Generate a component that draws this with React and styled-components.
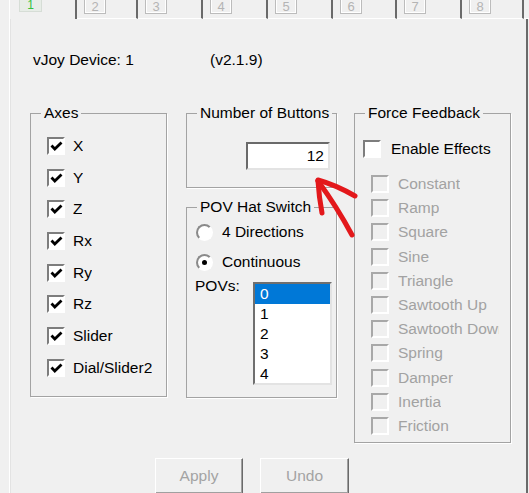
import React from "react";
import styled, { createGlobalStyle } from "styled-components";

const GlobalStyle = createGlobalStyle`
    body {
        margin: 0;
        background: #f0f0f0;
        font-family: "Liberation Sans", Arial, sans-serif;
    }
`

const Page = styled.div`
    position: relative;
    width: 529px;
    height: 493px;
    overflow: hidden;
    background: #f0f0f0;
    font-size: 15.5px;
    color: #000;
`

const TabStrip = styled.div`
    display: flex;
    height: 19px;
    padding-left: 9px;
`

const Tab = styled.div`
    box-sizing: border-box;
    width: ${({ $w }) => $w}px;
    height: 19px;
    border-right: 2px solid #6a6a6a;
    border-bottom: ${({ $active }) => ($active ? "none" : "1px solid #fff")};
    border-left: ${({ $active }) => ($active ? "1px solid #fff" : "none")};
    padding-left: ${({ $active }) => ($active ? 9 : 7)}px;
    display: flex;
    align-items: flex-start;
`

const TabFiller = styled.div`
    flex: 1;
    border-bottom: 1px solid #fff;
`

const TabIcon = styled.div`
    width: 23px;
    height: 13px;
    margin-top: -1px;
    box-sizing: border-box;
    background: #e7ede7;
    border: 1px solid #d6ddd6;
    color: #33c23f;
    font-size: 12px;
    line-height: 11px;
    text-align: center;
`

const DigitBox = styled.div`
    width: 22px;
    height: 16px;
    margin-top: -2px;
    box-sizing: border-box;
    border: 1px solid #bcbcbc;
    box-shadow: inset 1px 1px #fff, inset -1px -1px #fff;
    color: #b4b4b4;
    font-size: 13px;
    line-height: 15px;
    text-align: center;
`

const Panel = styled.div`
    box-sizing: border-box;
    margin-left: 9px;
    width: 519px;
    height: 480px;
    border-left: 1px solid #fff;
    border-right: 2px solid #6a6a6a;
    box-shadow: inset 1px 0 #e3e3e3;
    padding: 32px 0 0 20px;
`

const Header = styled.div`
    display: flex;
    margin-left: 3px;
    line-height: 18px;
`

const DeviceLabel = styled.span`
    width: 177px;
`

const GroupsRow = styled.div`
    display: flex;
    align-items: flex-start;
    margin-top: 35px;
`

const Group = styled.fieldset`
    box-sizing: border-box;
    margin: 0;
    margin-left: ${({ $ml }) => $ml || 0}px;
    padding: 0;
    min-width: 0;
    width: ${({ $w }) => $w}px;
    height: ${({ $h }) => $h}px;
    border: 1px solid #a3a3a3;
    box-shadow: 1px 1px 0 #fff;
`

const Legend = styled.legend`
    margin-left: 10px;
    padding: 0 3px;
    line-height: 18px;
`

const Column = styled.div`
    display: flex;
    flex-direction: column;
    gap: 10px;
    margin-left: 19px;
`

const AxesList = styled.div`
    padding: 8px 0 0 16px;
`

const CheckRow = styled.div`
    display: flex;
    align-items: center;
    height: ${({ $h }) => $h}px;
    gap: ${({ $gap }) => $gap || 8}px;
    color: ${({ $disabled }) => ($disabled ? "#a2a2a2" : "#000")};
`

const Box = styled.div`
    flex: none;
    box-sizing: border-box;
    width: 18px;
    height: 18px;
    border: 2px solid;
    border-color: ${({ $disabled }) =>
        $disabled ? "#a8a8a8 #fff #fff #a8a8a8" : "#7d7d7d #fff #fff #7d7d7d"};
    background: ${({ $disabled }) => ($disabled ? "#f0f0f0" : "#fff")};
    display: flex;
    align-items: center;
    justify-content: center;
`

const Label = styled.span`
    white-space: nowrap;
    overflow: hidden;
    max-width: ${({ $max }) => ($max ? `${$max}px` : "none")};
    line-height: 18px;
`

const NumberWrap = styled.div`
    display: flex;
    justify-content: flex-end;
    padding: 20px 6px 0 0;
`

const NumberInput = styled.div`
    box-sizing: border-box;
    width: 84px;
    height: 28px;
    border: 2px solid;
    border-color: #6a6a6a #e3e3e3 #e3e3e3 #6a6a6a;
    background: #fff;
    text-align: right;
    padding-right: 4px;
    line-height: 24px;
`

const PovBody = styled.div`
    padding: 1px 0 0 9px;
`

const RadioRow = styled.div`
    display: flex;
    align-items: center;
    gap: 9px;
    height: 30px;
`

const Radio = styled.div`
    flex: none;
    box-sizing: border-box;
    width: 17px;
    height: 17px;
    border-radius: 50%;
    border: 2px solid;
    border-color: #8a8a8a #fff #fff #8a8a8a;
    background: #fff;
    display: flex;
    align-items: center;
    justify-content: center;

    &::after {
        content: "";
        display: ${({ $on }) => ($on ? "block" : "none")};
        width: 5px;
        height: 5px;
        border-radius: 50%;
        background: #000;
    }
`

const PovRow = styled.div`
    display: flex;
    align-items: flex-start;
    margin-left: -1px;
`

const PovLabel = styled.span`
    width: 58px;
    line-height: 18px;
`

const ListBox = styled.div`
    box-sizing: border-box;
    width: 79px;
    height: 103px;
    margin-top: 5px;
    border: 2px solid;
    border-color: #6f6f6f #e3e3e3 #e3e3e3 #6f6f6f;
    background: #fff;
`

const ListItem = styled.div`
    height: 20px;
    line-height: 20px;
    padding-left: 5px;
    background: ${({ $selected }) => ($selected ? "#0078d7" : "transparent")};
    color: ${({ $selected }) => ($selected ? "#fff" : "#000")};
`

const FfBody = styled.div`
    padding: 15px 0 0 8px;
`

const EffectList = styled.div`
    margin-top: 11px;
    padding-left: 8px;
`

const ButtonRow = styled.div`
    display: flex;
    gap: 17px;
    margin-top: 15px;
    padding-left: 125px;
`

const PushButton = styled.div`
    box-sizing: border-box;
    width: ${({ $w }) => $w}px;
    height: 36px;
    border: 1px solid;
    border-color: #fff #6a6a6a #6a6a6a #fff;
    box-shadow: inset -1px -1px #a0a0a0;
    color: #a3a3a3;
    display: flex;
    align-items: center;
    justify-content: center;
`

const Arrow = styled.svg`
    position: absolute;
    left: 0;
    top: 0;
    pointer-events: none;
`

const Check = () => (
    <svg width="13" height="12" viewBox="0 0 13 12">
        <polyline points="1.5,5.5 4.8,9 11.5,2.5" fill="none" stroke="#000" strokeWidth="2.8" />
    </svg>
)

const tabs = [
    { n: 1, w: 68, active: true },
    { n: 2, w: 61 },
    { n: 3, w: 65 },
    { n: 4, w: 65 },
    { n: 5, w: 65 },
    { n: 6, w: 64 },
    { n: 7, w: 65 },
    { n: 8, w: 62 },
]

const axes = ["X", "Y", "Z", "Rx", "Ry", "Rz", "Slider", "Dial/Slider2"]

const effects = [
    "Constant", "Ramp", "Square", "Sine", "Triangle", "Sawtooth Up",
    "Sawtooth Down", "Spring", "Damper", "Inertia", "Friction",
]

export default function App() {
    return (
        <>
            <GlobalStyle />
            <Page>
                <TabStrip>
                    {tabs.map((t) => (
                        <Tab key={t.n} $w={t.w} $active={t.active}>
                            {t.active ? <TabIcon>1</TabIcon> : <DigitBox>{t.n}</DigitBox>}
                        </Tab>
                    ))}
                    <TabFiller />
                </TabStrip>
                <Panel>
                    <Header>
                        <DeviceLabel>vJoy Device: 1</DeviceLabel>
                        <span>(v2.1.9)</span>
                    </Header>
                    <GroupsRow>
                        <Group $w={137} $h={293}>
                            <Legend>Axes</Legend>
                            <AxesList>
                                {axes.map((a) => (
                                    <CheckRow key={a} $h={31.7}>
                                        <Box><Check /></Box>
                                        <Label>{a}</Label>
                                    </CheckRow>
                                ))}
                            </AxesList>
                        </Group>
                        <Column>
                            <Group $w={151} $h={84}>
                                <Legend>Number of Buttons</Legend>
                                <NumberWrap>
                                    <NumberInput>12</NumberInput>
                                </NumberWrap>
                            </Group>
                            <Group $w={151} $h={200}>
                                <Legend>POV Hat Switch</Legend>
                                <PovBody>
                                    <RadioRow>
                                        <Radio />
                                        <span>4 Directions</span>
                                    </RadioRow>
                                    <RadioRow>
                                        <Radio $on />
                                        <span>Continuous</span>
                                    </RadioRow>
                                    <PovRow>
                                        <PovLabel>POVs:</PovLabel>
                                        <ListBox>
                                            {[0, 1, 2, 3, 4].map((i) => (
                                                <ListItem key={i} $selected={i === 0}>{i}</ListItem>
                                            ))}
                                        </ListBox>
                                    </PovRow>
                                </PovBody>
                            </Group>
                        </Column>
                        <Group $w={157} $h={339} $ml={17}>
                            <Legend>Force Feedback</Legend>
                            <FfBody>
                                <CheckRow $h={24} $gap={10}>
                                    <Box />
                                    <Label>Enable Effects</Label>
                                </CheckRow>
                                <EffectList>
                                    {effects.map((e) => (
                                        <CheckRow key={e} $h={24.2} $gap={9} $disabled>
                                            <Box $disabled />
                                            <Label $max={101}>{e}</Label>
                                        </CheckRow>
                                    ))}
                                </EffectList>
                            </FfBody>
                        </Group>
                    </GroupsRow>
                    <ButtonRow>
                        <PushButton $w={88}>Apply</PushButton>
                        <PushButton $w={89}>Undo</PushButton>
                    </ButtonRow>
                </Panel>
                <Arrow width="529" height="493" viewBox="0 0 529 493">
                    <g fill="none" stroke="#e3181b" strokeWidth="5" strokeLinecap="round">
                        <path d="M355 196 Q336 185 318 180" />
                        <path d="M318 181 Q319 197 322 213" />
                        <path d="M318 181 Q337 207 352 235" />
                    </g>
                </Arrow>
            </Page>
        </>
    )
}
